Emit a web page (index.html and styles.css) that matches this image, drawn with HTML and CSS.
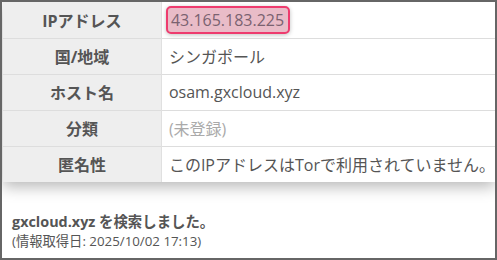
FILE: index.html
```html
<!DOCTYPE html>
<html lang="ja">
<head>
<meta charset="utf-8">
<link rel="stylesheet" href="styles.css">
</head>
<body>
<div class="frame">
  <div class="card">
    <table class="info">
      <tr><th>IPアドレス</th><td><span class="ip">43.165.183.225</span></td></tr>
      <tr><th>国/地域</th><td>シンガポール</td></tr>
      <tr><th>ホスト名</th><td>osam.gxcloud.xyz</td></tr>
      <tr><th>分類</th><td class="muted">(未登録)</td></tr>
      <tr><th>匿名性</th><td>このIPアドレスはTorで利用されていません。</td></tr>
    </table>
  </div>
  <div class="note">
    <p class="title">gxcloud.xyz を検索しました。</p>
    <p class="date">(情報取得日: 2025/10/02 17:13)</p>
  </div>
</div>
</body>
</html>
```
FILE: styles.css
```css
html, body {
  margin: 0;
  padding: 0;
  background: #fff;
}
.frame {
  width: 497px;
  height: 260px;
  box-sizing: border-box;
  border: 2px solid #666;
  overflow: hidden;
  font-family: "Open Sans", "Noto Sans CJK JP", sans-serif;
  color: #555;
}
.card {
  margin-left: 1px;
  box-shadow: 0 5px 14px rgba(0, 0, 0, 0.28);
}
.info {
  width: 100%;
  border-collapse: collapse;
  font-size: 16px;
}
.info tr {
  height: 36px;
  border-bottom: 1px solid #ddd;
}
.info tr:last-child {
  border-bottom: 0;
}
.info th {
  width: 162px;
  background: #eeeeee;
  border-right: 1px solid #e0e0e0;
  font-weight: bold;
  color: #555;
  text-align: center;
  padding: 0;
}
.info td {
  background: #fff;
  padding: 0 0 0 7px;
  text-align: left;
  white-space: nowrap;
}
.info .muted {
  color: #aaa;
}
.ip {
  display: inline-block;
  margin-left: -3px;
  padding: 1px 4px 0 3px;
  line-height: 23px;
  background: #e9bcc8;
  border: 2px solid #ee3b6e;
  border-radius: 5px;
  box-shadow: 0 1px 4px rgba(0, 0, 0, 0.25);
  color: #7a6270;
}
.note {
  padding: 29px 0 0 10px;
}
.note p {
  margin: 0;
}
.title {
  font-size: 14.4px;
  font-weight: bold;
  line-height: 21px;
}
.date {
  font-size: 13.3px;
  line-height: 19px;
}
```
